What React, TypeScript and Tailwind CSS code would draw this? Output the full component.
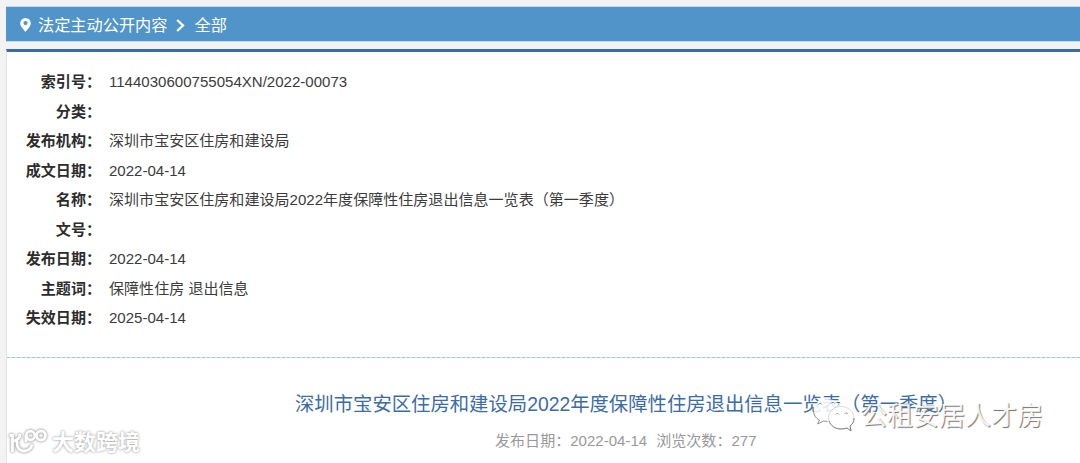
const ROWS = [
  { label: "索引号", value: "1144030600755054XN/2022-00073" },
  { label: "分类", value: "" },
  { label: "发布机构", value: "深圳市宝安区住房和建设局" },
  { label: "成文日期", value: "2022-04-14" },
  { label: "名称", value: "深圳市宝安区住房和建设局2022年度保障性住房退出信息一览表（第一季度）" },
  { label: "文号", value: "" },
  { label: "发布日期", value: "2022-04-14" },
  { label: "主题词", value: "保障性住房 退出信息" },
  { label: "失效日期", value: "2025-04-14" },
];

function Breadcrumb() {
  return (
    <div className="flex h-9 items-center border-y border-[#bddcf2] bg-[#5194c9] pl-[14px] text-[16.2px] leading-none text-white">
      <svg className="mt-px" width="11" height="14" viewBox="0 0 11 14" fill="currentColor">
        <path fillRule="evenodd" d="M5.5 0A5.3 5.3 0 0 0 .2 5.3C.2 8.6 3.8 11.4 5.5 14c1.7-2.6 5.3-5.4 5.3-8.7A5.3 5.3 0 0 0 5.5 0Zm0 3a2.1 2.1 0 1 1 0 4.2 2.1 2.1 0 0 1 0-4.2Z" />
      </svg>
      <span className="ml-[7px] pt-[2px]">法定主动公开内容</span>
      <svg className="ml-2 mt-[2px]" width="9" height="13" viewBox="0 0 9 13" fill="none" stroke="currentColor" strokeWidth="2.3">
        <path d="m1.2 1 5.8 5.5L1.2 12" />
      </svg>
      <span className="ml-[10px] pt-[2px]">全部</span>
    </div>
  );
}

function WechatMark() {
  return (
    <div className="absolute left-[812px] top-[395px] flex">
      <svg width="44" height="38" viewBox="0 0 44 38" fill="none">
        <path
          d="M15 4C7 4 1.5 9 1.5 16c0 4 2 7 6 9l-2 4 6-3 5 1 9-4 3-9C27 8 22 4 15 4Z"
          fill="white"
          fillOpacity=".85"
        />
        <path d="M1.5 15c0 5 2 8 6 10l-2 4 6-3 4 .5" stroke="#858585" strokeWidth=".9" />
        <path
          d="M29 11.5c-7 0-12.5 5-12.5 11.3S22 34 29 34c2 0 4-.3 6-1l4 3-1-5c3-2 4-5 4-8.2 0-6.3-6-11.3-13-11.3Z"
          fill="white"
          fillOpacity=".94"
          stroke="#c2c2c2"
          strokeWidth=".6"
        />
        <path d="M17 26c2 5 6 8 12 8 2 0 4-.3 6-1l4 3-1-5c3-2 4-5 4-8" stroke="#777" strokeWidth=".9" />
        <path d="M6.5 9.5c1-1.5 2.5-1.5 3.5 0m9-1c1-1.5 2.5-1.5 3.5 0" stroke="#6d8295" />
        <path d="M23.5 19.5c1-1.5 2.5-1.5 3.5 0m5.5-.5c1-1.5 2.5-1.5 3.5 0" stroke="#999" />
      </svg>
      <span className="ml-[5px] mt-[7px] whitespace-nowrap text-[26px] leading-[28px] text-white/90 [text-shadow:1px_1px_0.8px_#777]">
        公租安居人才房
      </span>
    </div>
  );
}

function SiteMark() {
  return (
    <div className="absolute left-[8px] top-[429px] flex items-center">
      <svg
        className="overflow-visible [filter:drop-shadow(0_0_1px_#aaa)_drop-shadow(0_0_1px_#bbb)]"
        width="40"
        height="28"
        viewBox="0 0 40 28"
        fill="none"
        stroke="white"
        strokeWidth="2.8"
      >
        <path d="M1.5 6.5h3V23M12 5c0 3.500-2 6-6 7M9 12c-.5 6 2 10 7 10 4.500 0 7-2 8-6.500" />
        <path d="M18 13V6.500" />
        <circle cx="22.500" cy="6.500" r="4.300" />
        <circle cx="33" cy="6.500" r="4.500" />
      </svg>
      <span className="ml-[4px] whitespace-nowrap text-[22px] font-bold leading-[28px] text-white [text-shadow:0_0_2px_#aaa,0_0_3px_#bbb]">
        大数跨境
      </span>
    </div>
  );
}

export default function App() {
  return (
    <div className="relative h-[463px] w-full overflow-hidden bg-[#f3f3f3] pl-[6px] pt-[6px] font-['Liberation_Sans','Noto_Sans_CJK_SC',sans-serif] text-[15.05px] text-[#3c3c3c]">
      <Breadcrumb />
      <main className="mt-[7px] h-[414px] border-l border-t-[3px] border-l-[#e3e3e3] border-t-[#376da1] bg-white">
        <dl className="h-[305px] pt-[15px]">
          {ROWS.map((row) => (
            <div key={row.label} className="flex h-[29.5px] items-center whitespace-nowrap leading-none">
              <dt className="w-[94px] text-right font-bold text-[#2c2c2c]">{row.label}：</dt>
              <dd className="ml-2">{row.value}</dd>
            </div>
          ))}
        </dl>
        <div className="h-px bg-[repeating-linear-gradient(90deg,#9fc6d3_0_3px,#d3e4e9_3px_5px)]" />
        <h1 className="mt-[31px] whitespace-nowrap pl-[288px] text-[19.35px] leading-[30px] text-[#3b6ca6]">
          深圳市宝安区住房和建设局2022年度保障性住房退出信息一览表（第一季度）
        </h1>
        <p className="mt-[11px] flex whitespace-nowrap pl-[488px] leading-[22px] text-[#999]">
          <span>发布日期：2022-04-14</span>
          <span className="ml-[9px]">浏览次数：277</span>
        </p>
      </main>
      <WechatMark />
      <SiteMark />
    </div>
  );
}
